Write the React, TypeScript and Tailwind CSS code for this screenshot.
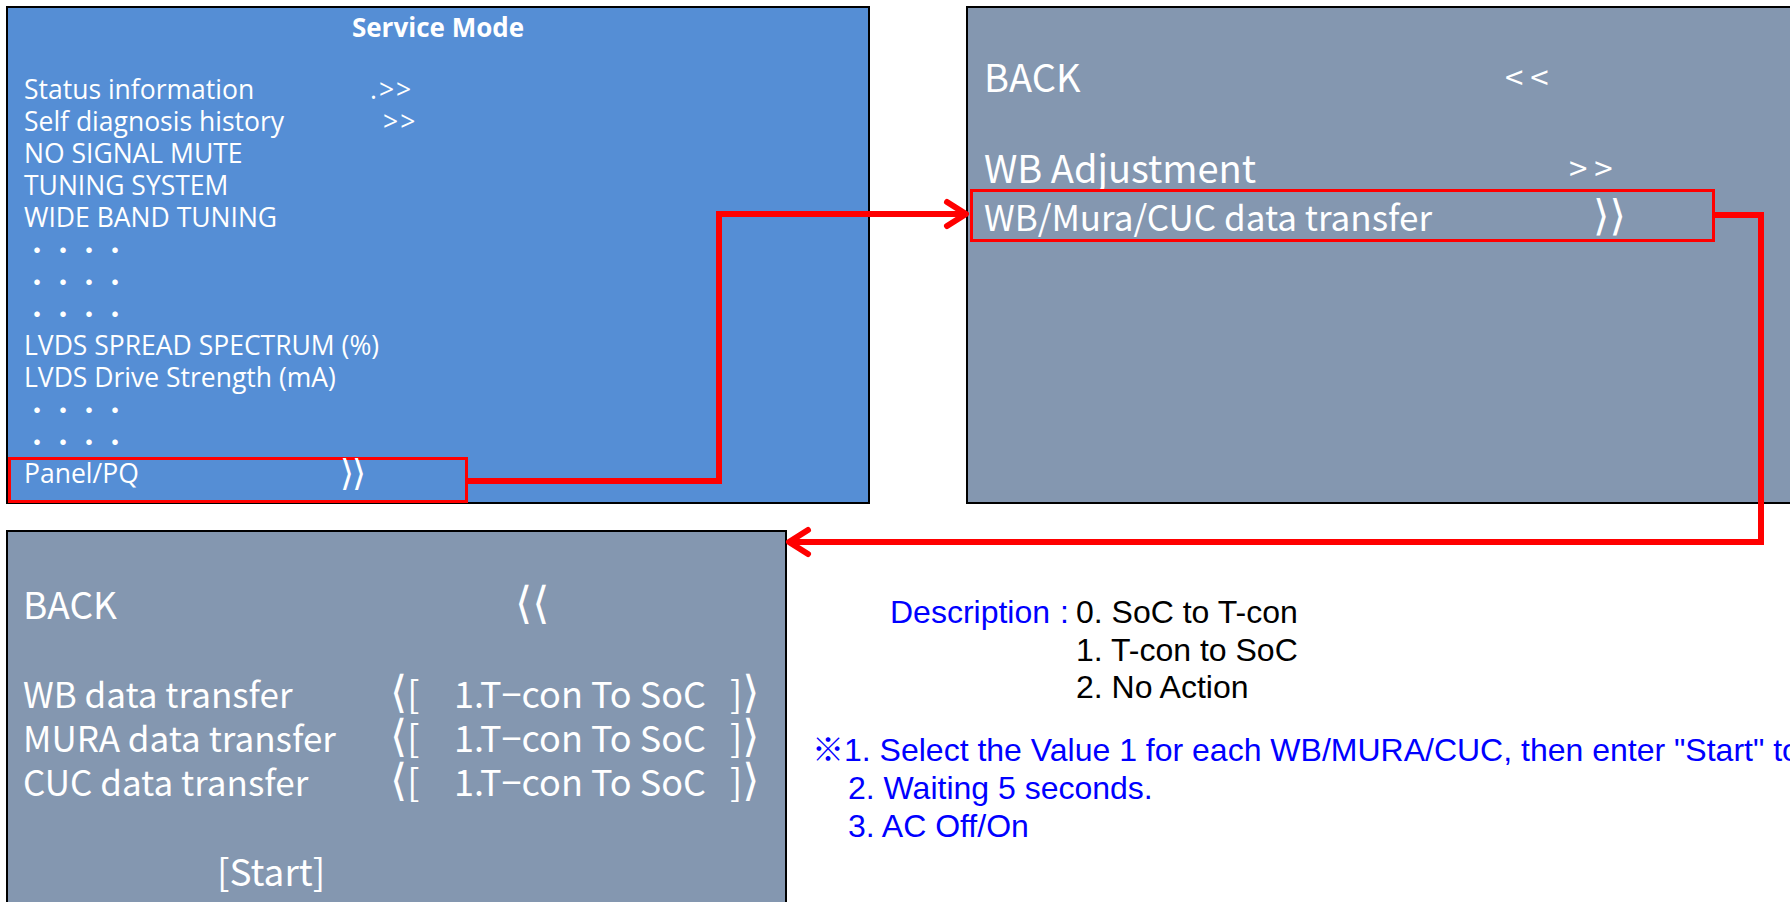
import React from "react";

const segoe = { fontFamily: '"Open Sans", "Noto Sans", sans-serif' };
const meiryo = { fontFamily: '"Noto Sans CJK JP", "Noto Sans", sans-serif' };
const arial = { fontFamily: '"Liberation Sans", Arial, "Noto Sans CJK JP", sans-serif' };
const angle = { fontFamily: '"DejaVu Sans", sans-serif' };

type Row = { label: string; chev?: string; w?: number; dots?: boolean };

const serviceRows: Row[] = [
  { label: "Status information", chev: ".>>", w: 346 },
  { label: "Self diagnosis history", chev: ">>", w: 359 },
  { label: "NO SIGNAL MUTE" },
  { label: "TUNING SYSTEM" },
  { label: "WIDE BAND TUNING" },
  { label: "", dots: true },
  { label: "", dots: true },
  { label: "", dots: true },
  { label: "LVDS SPREAD SPECTRUM (%)" },
  { label: "LVDS Drive Strength (mA)" },
  { label: "", dots: true },
  { label: "", dots: true },
];

const transferRows = ["WB data transfer", "MURA data transfer", "CUC data transfer"];

function ServiceMode() {
  return (
    <div className="flex h-[498px] w-[864px] shrink-0 flex-col border-2 border-black bg-[#558ED5] text-white" style={segoe}>
      <div className="flex h-[40px] items-center justify-center text-[26px] font-bold">Service Mode</div>
      <div className="mt-[26px] flex flex-col">
        {serviceRows.map((r, i) => (
          <div key={i} className="flex h-[32px] items-center pl-4 text-[26.5px] leading-none whitespace-nowrap">
            {r.dots ? (
              <span style={meiryo} className="text-[26px]">・・・・</span>
            ) : (
              <>
                <span style={{ width: r.w }} className="shrink-0">{r.label}</span>
                {r.chev && <span className="tracking-[2px]">{r.chev}</span>}
              </>
            )}
          </div>
        ))}
        <div className="h-[46px] w-[460px] border-[3px] border-[#ff0000] pl-[13px]">
          <div className="flex h-[26px] items-center text-[26.5px] leading-none">
            <span className="w-[316px] shrink-0">Panel/PQ</span>
            <span style={angle} className="text-[36px] leading-none tracking-[-2px]">⟩⟩</span>
          </div>
        </div>
      </div>
    </div>
  );
}

function PanelMenu() {
  return (
    <div className="flex h-[498px] w-[860px] shrink-0 flex-col border-2 border-black bg-[#8497B0] pt-[48px] text-white" style={meiryo}>
      <div className="flex h-[40px] items-center pl-4 text-[38px] leading-none">
        <span className="w-[521px] shrink-0">BACK</span>
        <span className="tracking-[7px] text-[33px]">&lt;&lt;</span>
      </div>
      <div className="mt-[51px] flex h-[40px] items-center pl-4 text-[38px] leading-none">
        <span className="w-[585px] shrink-0">WB Adjustment</span>
        <span className="tracking-[7px] text-[33px]">&gt;&gt;</span>
      </div>
      <div className="ml-[2px] mt-[2px] flex h-[53px] w-[745px] items-center border-[3px] border-[#ff0000] pl-[11px] text-[35px] leading-none">
        <span className="w-[609px] shrink-0">WB/Mura/CUC data transfer</span>
        <span style={angle} className="text-[42px] leading-none">⟩⟩</span>
      </div>
    </div>
  );
}

function TransferMenu() {
  return (
    <div className="flex h-[400px] w-[781px] shrink-0 flex-col border-2 border-black bg-[#8497B0] pt-[51px] text-white" style={meiryo}>
      <div className="flex h-[40px] items-center pl-[15px] text-[37px] leading-none">
        <span className="w-[492px] shrink-0">BACK</span>
        <span style={angle} className="text-[44px] leading-none">⟨⟨</span>
      </div>
      <div className="mt-[47px] flex flex-col">
        {transferRows.map((t) => (
          <div key={t} className="flex h-[44px] items-center pl-[15px] text-[35px] leading-none whitespace-nowrap">
            <span className="w-[367px] shrink-0">{t}</span>
            <span className="flex w-[64px] shrink-0 items-center">
              <span style={angle} className="text-[44px] leading-none">⟨</span>
              <span className="text-[36px]">[</span>
            </span>
            <span className="w-[276px] shrink-0 text-[36px]">1.T−con To SoC</span>
            <span className="flex items-center">
              <span className="text-[36px]">]</span>
              <span style={angle} className="text-[44px] leading-none">⟩</span>
            </span>
          </div>
        ))}
      </div>
      <div className="mt-[46px] flex h-[44px] items-center pl-[209px] text-[37px] leading-none">[Start]</div>
    </div>
  );
}

function Notes() {
  return (
    <div className="min-w-0 flex-1 pl-[25px] pt-[64px] whitespace-nowrap text-[32px]" style={arial}>
      <div className="ml-[78px] flex leading-[37.5px]">
        <span className="w-[186px] shrink-0 text-[#0000ff]">
          Description<span className="ml-[10px]">:</span>
        </span>
        <div className="flex flex-col text-black">
          <span>0. SoC to T-con</span>
          <span>1. T-con to SoC</span>
          <span>2. No Action</span>
        </div>
      </div>
      <div className="mt-[24px] flex flex-col leading-[38px] text-[#0000ff]">
        <span>※1. Select the Value 1 for each WB/MURA/CUC, then enter "Start" to transfer data.</span>
        <span className="pl-[36px]">2. Waiting 5 seconds.</span>
        <span className="pl-[36px]">3. AC Off/On</span>
      </div>
    </div>
  );
}

export default function App() {
  return (
    <div className="relative h-[902px] w-[1790px] overflow-hidden bg-white">
      <div className="flex gap-[96px] pl-[6px] pt-[6px]">
        <ServiceMode />
        <PanelMenu />
      </div>
      <div className="mt-[26px] flex pl-[6px]">
        <TransferMenu />
        <Notes />
      </div>

      {/* connectors */}
      <svg className="pointer-events-none absolute left-0 top-0" width="1790" height="902" viewBox="0 0 1790 902">
        <g fill="none" stroke="#ff0000" strokeWidth="6">
          <path d="M468 481 H719 V214 H964" strokeLinejoin="miter" />
          <path d="M947 202 L966 214 L947 226" strokeLinecap="round" strokeLinejoin="round" />
          <path d="M1713 215 H1761 V542 H790" strokeLinejoin="miter" />
          <path d="M808 530 L789 542 L808 554" strokeLinecap="round" strokeLinejoin="round" />
        </g>
      </svg>
    </div>
  );
}
